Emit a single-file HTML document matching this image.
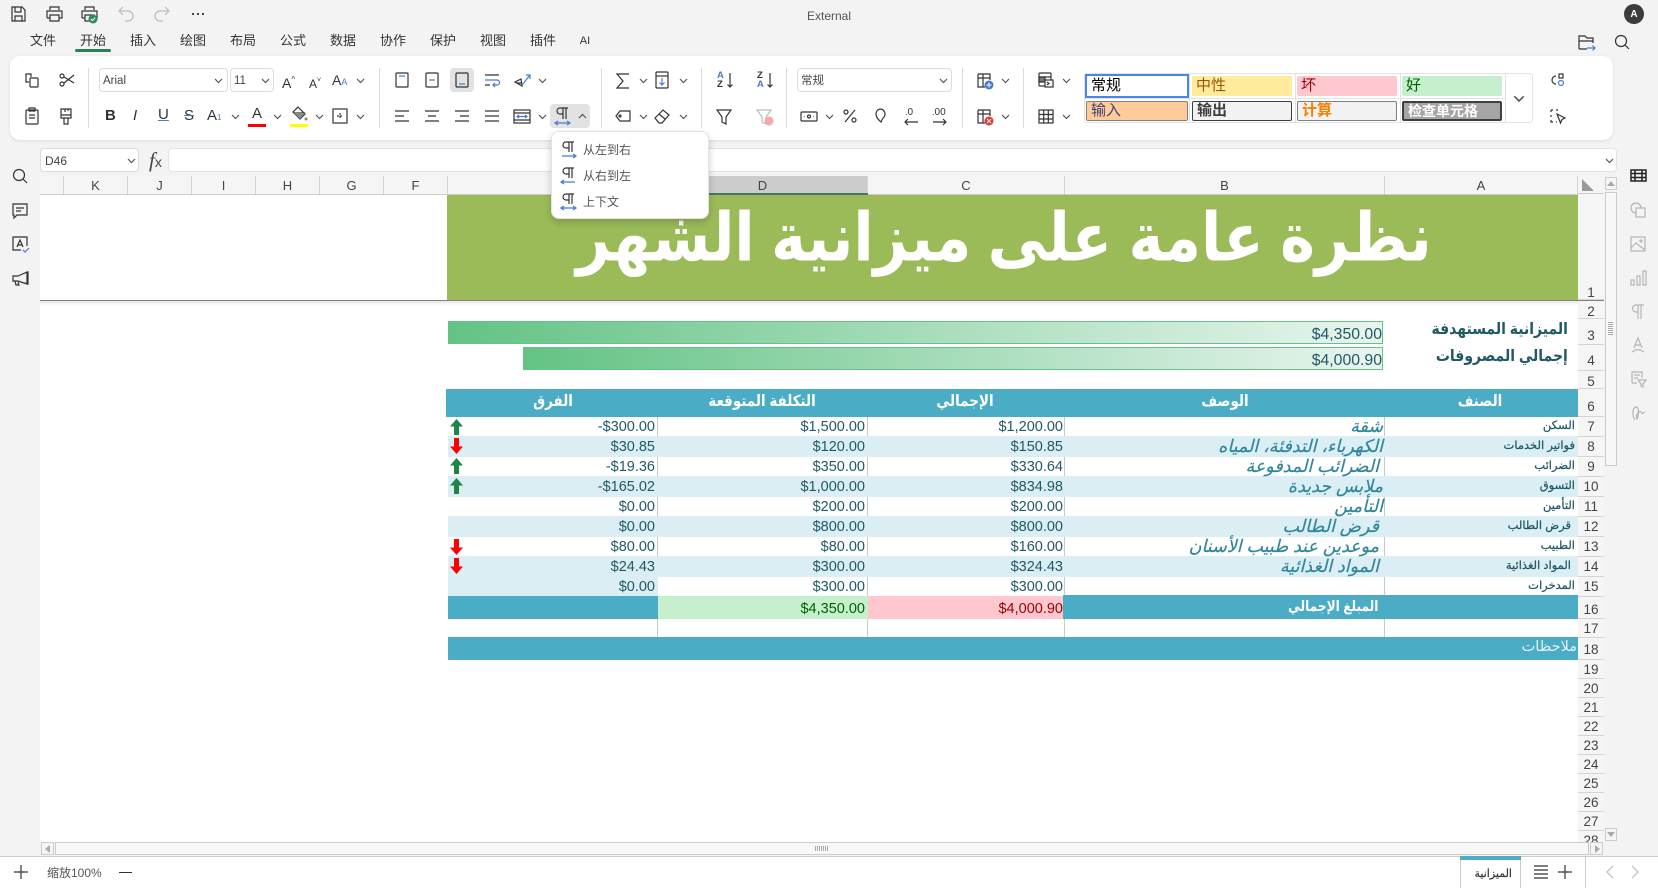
<!DOCTYPE html>
<html lang="zh"><head><meta charset="utf-8"><title>External</title>
<style>
html,body{margin:0;padding:0}
body{width:1658px;height:888px;overflow:hidden;background:#f3f3f3;position:relative;font-family:"Liberation Sans","Noto Sans CJK SC",sans-serif;color:#333}
div,svg,span.a{position:absolute}
svg{overflow:visible}
svg.i{width:24px;height:24px;fill:none;stroke:#333;stroke-width:1.2}
.b{stroke:#4a78d4}
.m{top:32px;width:50px;text-align:center;font-size:13px;line-height:18px;color:#333}
.sel{background:#fff;border:1px solid #dcdcdc;border-radius:4px;box-sizing:border-box;font-size:11.5px;line-height:24px;padding-left:3px;color:#444}
.sep{top:68px;height:60px;width:1px;background:#dcdcdc}
.ch{width:9px;height:6px;fill:none;stroke:#555;stroke-width:1.2}
.st{box-sizing:border-box;font-size:15px;line-height:18px;padding-left:4px;height:20px}
.ch2{top:176px;height:18px;font-size:13px;line-height:19px;text-align:center;color:#444;border-right:1px solid #d4d4d4;box-sizing:border-box;background:#f5f5f5}
.rh{left:1578px;width:26px;text-align:center;font-size:13px;color:#444;background:#f5f5f5;border-bottom:1px solid #d4d4d4;box-sizing:border-box}
.rn{left:1578px;width:26px;text-align:center;font-size:13.5px;line-height:16px;color:#444}
.num{font-size:14.5px;line-height:20px;height:20px;color:#215967;text-align:right;white-space:nowrap}
.ar{font-family:"Liberation Sans","DejaVu Sans",sans-serif;direction:rtl;white-space:nowrap;transform-origin:100% 50%}
.la{font-size:11.5px;line-height:20px;height:20px;color:#215967;-webkit-text-stroke:.25px #215967}
.de{font-size:17.5px;line-height:20px;height:20px;color:#31869b;font-style:italic;-webkit-text-stroke:.2px #31869b}
.he{font-size:15.5px;line-height:28px;color:#fff;font-weight:bold;transform-origin:50% 50%;text-align:center;transform:scaleX(.87)}
.gl{width:1px;background:#c8c8c8}
.mi{left:583px;font-size:12px;line-height:18px;color:#555;white-space:nowrap}
</style></head><body>
<svg width="0" height="0" style="position:absolute"><defs>
<symbol id="c" viewBox="0 0 9 6"><path d="M1 1l3.5 3.5L8 1"/></symbol>
<symbol id="up" viewBox="0 0 13 16"><path d="M6.5 0L13 7.500H9V16H4V7.500H0z"/></symbol>
<symbol id="dn" viewBox="0 0 13 16"><path d="M6.5 16L13 8.500H9V0H4v8.500H0z"/></symbol>
</defs></svg>

<!-- title bar -->
<div style="left:0;top:7px;width:1658px;text-align:center;font-size:12px;line-height:18px;color:#555">External</div>
<svg class="i" style="left:6px;top:2px"><path d="M6 5h10l3 3v11H6z M9 5v5h6V5 M9 19v-5h7v5"/></svg>
<svg class="i" style="left:42px;top:2px"><path d="M8 8V5h9v3 M5 16V9h15v7h-3 M8 16H5 M8 13h9v6H8z"/></svg>
<svg class="i" style="left:77px;top:2px"><path d="M8 8V5h9v3 M5 16V9h15v7h-3 M8 16H5 M8 13h9v6H8z"/></svg>
<svg style="left:88px;top:14px;width:10px;height:10px"><circle cx="5" cy="5" r="4.5" fill="#2e8b57"/><path d="M2.8 5l1.6 1.6 2.8-3" stroke="#fff" fill="none"/></svg>
<svg class="i" style="left:114px;top:2px;stroke:#bbb"><path d="M9 5L5 9l4 4 M5 9h9a5 5 0 0 1 0 10h-3"/></svg>
<svg class="i" style="left:150px;top:2px;stroke:#bbb"><path d="M15 5l4 4-4 4 M19 9h-9a5 5 0 0 0 0 10h3"/></svg>
<div style="left:192px;top:13px;width:2px;height:2px;background:#444;box-shadow:5px 0 #444,10px 0 #444"></div>
<div style="left:1624px;top:4px;width:20px;height:20px;border-radius:50%;background:#3c3c3c;color:#fff;font-size:10px;font-weight:bold;line-height:21px;text-align:center">A</div>

<!-- menu -->
<div class="m" style="left:18px">文件</div>
<div class="m" style="left:68px">开始</div>
<div class="m" style="left:118px">插入</div>
<div class="m" style="left:168px">绘图</div>
<div class="m" style="left:218px">布局</div>
<div class="m" style="left:268px">公式</div>
<div class="m" style="left:318px">数据</div>
<div class="m" style="left:368px">协作</div>
<div class="m" style="left:418px">保护</div>
<div class="m" style="left:468px">视图</div>
<div class="m" style="left:518px">插件</div>
<div class="m" style="left:560px;font-size:11px">AI</div>
<div style="left:75px;top:49px;width:36px;height:3px;border-radius:2px;background:#2e7d5b"></div>
<svg class="i" style="left:1574px;top:30px"><path d="M5 19V6h6l2 2h6v5 M5 11h14 M5 19h8"/><path class="b" d="M13 18h8M18.500 15.500L21 18l-2.500 2.500"/></svg>
<svg class="i" style="left:1610px;top:30px"><circle cx="11" cy="11" r="5.500"/><path d="M15 15l4 4"/></svg>

<!-- ribbon -->
<div style="left:10px;top:56px;width:1603px;height:84px;background:#fff;border-radius:10px;box-shadow:0 1px 3px rgba(0,0,0,.1)"></div>
<svg class="i" style="left:20px;top:68px"><path d="M11 9V6H6v8h3"/><rect x="10" y="10" width="8" height="9" rx="1"/></svg>
<svg class="i" style="left:55px;top:68px"><circle cx="7" cy="8" r="2"/><circle cx="7" cy="16" r="2"/><path d="M9 9l10 6M9 15l10-8"/></svg>
<svg class="i" style="left:20px;top:104px"><rect x="6" y="6" width="12" height="14" rx="1"/><path d="M9 4h6v3H9z M9 11h6M9 14h6"/></svg>
<svg class="i" style="left:54px;top:104px"><path d="M7 5h10v9H7z M7 11h10 M10 14h4v6h-4z M11 5v3M14 5v2"/></svg>
<div class="sep" style="left:88px"></div>
<div class="sep" style="left:379px"></div>
<div class="sep" style="left:601px"></div>
<div class="sep" style="left:701px"></div>
<div class="sep" style="left:786px"></div>
<div class="sep" style="left:962px"></div>
<div class="sep" style="left:1023px"></div>

<div class="sel" style="left:99px;top:68px;width:129px;height:24px">Arial</div>
<svg class="ch" style="left:214px;top:78px"><use href="#c"/></svg>
<div class="sel" style="left:230px;top:68px;width:44px;height:24px">11</div>
<svg class="ch" style="left:261px;top:78px"><use href="#c"/></svg>
<div style="left:282px;top:70px;font-size:14px;line-height:20px">A<span style="font-size:8px;vertical-align:6px">^</span></div>
<div style="left:309px;top:72px;font-size:12px;line-height:18px">A<span style="font-size:7px;vertical-align:6px">˅</span></div>
<div style="left:332px;top:70px;font-size:14px;line-height:20px">A<span style="font-size:9px;color:#4a78d4">A</span></div>
<svg class="ch" style="left:356px;top:78px"><use href="#c"/></svg>
<div style="left:105px;top:107px;font-size:15px;line-height:18px;font-weight:bold">B</div>
<div style="left:133px;top:107px;font-size:15px;line-height:18px;font-style:italic">I</div>
<div style="left:158px;top:106px;font-size:15px;line-height:18px;text-decoration:underline;text-decoration-color:#4a78d4">U</div>
<div style="left:184px;top:107px;font-size:15px;line-height:18px;text-decoration:line-through;text-decoration-color:#4a78d4">S</div>
<div style="left:207px;top:107px;font-size:15px;line-height:18px">A<span style="font-size:8px;color:#4a78d4">1</span></div>
<svg class="ch" style="left:231px;top:114px"><use href="#c"/></svg>
<div style="left:252px;top:105px;font-size:15px;line-height:18px">A</div>
<div style="left:248px;top:124px;width:18px;height:3px;background:#f00"></div>
<svg class="ch" style="left:273px;top:114px"><use href="#c"/></svg>
<svg class="i" style="left:286px;top:102px"><path d="M12 5l7 7-5 5-7-7z M8 11h11"/><path d="M8 11h11l-5 6z" fill="#888" stroke="none"/><circle cx="20" cy="17" r="1.500" fill="#888" stroke="none"/></svg>
<div style="left:290px;top:124px;width:18px;height:3px;background:#ff0"></div>
<svg class="ch" style="left:315px;top:114px"><use href="#c"/></svg>
<svg class="i b" style="left:328px;top:104px"><rect x="5" y="5" width="14" height="14"/><path d="M12 9v6M9 12h6" stroke-dasharray="2 1"/></svg>
<svg class="ch" style="left:356px;top:114px"><use href="#c"/></svg>

<div style="left:450px;top:68px;width:24px;height:24px;border-radius:4px;background:#e2e2e2"></div>
<svg class="i" style="left:390px;top:68px"><rect x="6" y="5" width="12" height="14" rx="1"/><path class="b" d="M9 8h6"/></svg>
<svg class="i" style="left:420px;top:68px"><rect x="6" y="5" width="12" height="14" rx="1"/><path class="b" d="M9 12h6"/></svg>
<svg class="i" style="left:450px;top:68px"><rect x="6" y="5" width="12" height="14" rx="1"/><path class="b" d="M9 16h6"/></svg>
<svg class="i" style="left:480px;top:68px"><path d="M5 7h14M5 17h5"/><path class="b" d="M5 12h12a2.500 2.500 0 0 1 0 5h-4M15 15l-2 2 2 2"/></svg>
<svg class="i" style="left:510px;top:68px"><path d="M5 14l6-3 1 7z M7 15h4"/><path class="b" d="M12 17l8-10M16 7h4v4"/></svg>
<svg class="ch" style="left:538px;top:78px"><use href="#c"/></svg>
<svg class="i" style="left:390px;top:104px"><path d="M5 7h14M5 12h9M5 17h14"/></svg>
<svg class="i" style="left:420px;top:104px"><path d="M5 7h14M8 12h8M5 17h14"/></svg>
<svg class="i" style="left:450px;top:104px"><path d="M5 7h14M10 12h9M5 17h14"/></svg>
<svg class="i" style="left:480px;top:104px"><path d="M5 7h14M5 12h14M5 17h14"/></svg>
<svg class="i" style="left:510px;top:104px"><rect x="4" y="6" width="16" height="13"/><path d="M4 9h16M4 16h16"/><path class="b" d="M7 12.500h10M9 11l-2 1.500L9 14M15 11l2 1.500-2 1.500"/></svg>
<svg class="ch" style="left:538px;top:114px"><use href="#c"/></svg>
<div style="left:550px;top:104px;width:40px;height:24px;border-radius:4px;background:#e2e2e2"></div>
<svg class="i" style="left:550px;top:104px"><path d="M13 4v11M16 4v11M18 4h-8a3 3 0 0 0 0 6h3"/><path class="b" d="M5 19h15M8 17l-3 2 3 2M17 17l3 2-3 2"/></svg>
<svg class="ch" style="left:578px;top:113px;transform:scaleY(-1)"><use href="#c"/></svg>

<svg class="i" style="left:611px;top:68px"><path d="M18 6H6l6 7-6 7h12"/></svg>
<svg class="ch" style="left:639px;top:78px"><use href="#c"/></svg>
<svg class="i" style="left:650px;top:68px"><rect x="6" y="4" width="12" height="16" rx="1"/><path d="M6 8h12"/><path class="b" d="M12 10v7M9.500 14.500L12 17l2.500-2.500"/></svg>
<svg class="ch" style="left:679px;top:78px"><use href="#c"/></svg>
<svg class="i" style="left:611px;top:104px"><path d="M9 7h10v10H9l-4-5z"/><circle cx="9" cy="12" r="1"/></svg>
<svg class="ch" style="left:639px;top:114px"><use href="#c"/></svg>
<svg class="i" style="left:650px;top:104px"><path d="M5 14l8-8 6 5-7 8H9z M9 10l6 5"/></svg>
<svg class="ch" style="left:679px;top:114px"><use href="#c"/></svg>

<div style="left:717px;top:71px;font-size:9.500px;line-height:9px;font-weight:bold;color:#4a78d4">A<br><span style="color:#333">Z</span></div>
<svg class="i" style="left:718px;top:68px"><path d="M12 5v14M9.500 16.500L12 19l2.500-2.500"/></svg>
<div style="left:757px;top:71px;font-size:9.500px;line-height:9px;font-weight:bold">Z<br><span style="color:#4a78d4">A</span></div>
<svg class="i" style="left:758px;top:68px"><path d="M12 5v14M9.500 16.500L12 19l2.500-2.500"/></svg>
<svg class="i" style="left:712px;top:104px"><path d="M5 6h14l-5 7v7l-4-2v-5z"/></svg>
<svg class="i" style="left:752px;top:104px;stroke:#bbb"><path d="M5 6h14l-5 7v7l-4-2v-5z"/></svg>
<svg style="left:764px;top:116px;width:10px;height:10px"><circle cx="5" cy="5" r="4.500" fill="#f5a9a9"/></svg>

<div class="sel" style="left:797px;top:68px;width:155px;height:24px">常规</div>
<svg class="ch" style="left:939px;top:78px"><use href="#c"/></svg>
<svg class="i" style="left:797px;top:104px"><rect x="4" y="8" width="16" height="9" rx="1"/><circle cx="12" cy="12.500" r="1.500"/><path d="M7 12.500h.5M16.500 12.500h.5"/></svg>
<svg class="ch" style="left:825px;top:114px"><use href="#c"/></svg>
<svg class="i" style="left:838px;top:104px"><path d="M17 6L7 18"/><circle cx="8" cy="8" r="2"/><circle cx="16" cy="16" r="2"/></svg>
<svg class="i" style="left:868px;top:104px"><path d="M12 5a5 5 0 0 1 4 8c-1 1-2 2-3 5-2-2-5-4-5-8a5 5 0 0 1 4-5z"/></svg>
<div style="left:905px;top:107px;font-size:9px;line-height:10px">.<span style="font-size:10px">0</span></div>
<svg class="i b" style="left:899px;top:108px"><path d="M6 14h13M9 11l-3 3 3 3"/></svg>
<div style="left:932px;top:107px;font-size:9px;line-height:10px">.<span style="font-size:10px">00</span></div>
<svg class="i b" style="left:928px;top:108px"><path d="M5 14h13M15 11l3 3-3 3"/></svg>

<svg class="i" style="left:973px;top:68px"><path d="M5 6h12v6M5 6v13h7M5 10h12M10 6v13"/></svg>
<svg style="left:984px;top:80px;width:10px;height:10px"><circle cx="5" cy="5" r="4.500" fill="#4a78d4"/><path d="M2.500 5h5M5 2.500v5" stroke="#fff"/></svg>
<svg class="ch" style="left:1001px;top:78px"><use href="#c"/></svg>
<svg class="i" style="left:973px;top:104px"><path d="M5 6h12v6M5 6v13h7M5 10h12M10 6v13"/></svg>
<svg style="left:984px;top:116px;width:10px;height:10px"><circle cx="5" cy="5" r="4.500" fill="#e53935"/><path d="M3 3l4 4M7 3l-4 4" stroke="#fff"/></svg>
<svg class="ch" style="left:1001px;top:114px"><use href="#c"/></svg>
<svg class="i" style="left:1034px;top:68px"><rect x="5" y="5" width="12" height="13" rx="1"/><path d="M5 9h12"/><path d="M5 9h6v5H5z" fill="#777"/><rect x="11" y="12" width="8" height="7" fill="#fff"/><path d="M13 14l2 1.500-2 1.500"/></svg>
<svg class="ch" style="left:1062px;top:78px"><use href="#c"/></svg>
<svg class="i" style="left:1034px;top:104px"><rect x="5" y="6" width="14" height="13"/><path d="M5 10.500h14M5 15h14M9.700 6v13M14.300 6v13"/></svg>
<svg class="ch" style="left:1062px;top:114px"><use href="#c"/></svg>

<!-- style gallery -->
<div style="left:1084px;top:73px;width:449px;height:50px;background:#fff;border:1px solid #e2e2e2;border-radius:3px;box-sizing:border-box"></div>
<div style="left:1189px;top:74px;width:1px;height:48px;background:#e2e2e2"></div>
<div style="left:1295px;top:74px;width:1px;height:48px;background:#e2e2e2"></div>
<div style="left:1400px;top:74px;width:1px;height:48px;background:#e2e2e2"></div>
<div style="left:1505px;top:74px;width:1px;height:48px;background:#e2e2e2"></div>
<div style="left:1085px;top:98px;width:420px;height:1px;background:#e2e2e2"></div>
<div class="st" style="left:1085px;top:74px;width:104px;height:24px;background:#fff;border:2px solid #4a86e8;color:#000;line-height:20px">常规</div>
<div class="st" style="left:1192px;top:76px;width:100px;background:#ffeb9c;color:#9c5700;border-radius:2px;line-height:20px">中性</div>
<div class="st" style="left:1297px;top:76px;width:100px;background:#ffc7ce;color:#9c0006;border-radius:2px;line-height:20px">坏</div>
<div class="st" style="left:1402px;top:76px;width:100px;background:#c6efce;color:#006100;border-radius:2px;line-height:20px">好</div>
<div class="st" style="left:1086px;top:101px;width:102px;background:#ffcc99;color:#3f3f76;border:1px solid #7f7f7f;border-radius:2px">输入</div>
<div class="st" style="left:1192px;top:101px;width:100px;background:#f2f2f2;color:#3f3f3f;border:1px solid #3f3f3f;border-radius:2px;font-weight:bold">输出</div>
<div class="st" style="left:1297px;top:101px;width:100px;background:#f2f2f2;color:#fa7d00;border:1px solid #7f7f7f;border-radius:2px;font-weight:bold">计算</div>
<div class="st" style="left:1402px;top:101px;width:100px;background:#a5a5a5;color:#fff;border:2px solid #3f3f3f;border-radius:2px;font-weight:bold;line-height:17px;font-size:14px">检查单元格</div>
<svg class="ch" style="left:1513px;top:95px;width:12px;height:8px"><use href="#c"/></svg>
<svg class="i" style="left:1545px;top:68px"><path d="M11 8a4 4 0 1 0 0 8"/><rect x="14" y="6" width="4" height="4"/><circle class="b" cx="16" cy="15" r="2.500"/></svg>
<svg class="i" style="left:1545px;top:104px"><path d="M6 6h2M11 6h2M6 6v2M6 11v2M6 16v2h2M11 18h1" /><path d="M12 10l8 4-3 1.500-1.500 3.500z"/></svg>

<!-- formula bar -->
<div class="sel" style="left:40px;top:148px;width:99px;height:24px;font-size:12px;padding-left:4px">D46</div>
<svg class="ch" style="left:127px;top:158px"><use href="#c"/></svg>
<div style="left:149px;top:149px;font-family:'Liberation Serif',serif;font-style:italic;font-size:21px;line-height:22px;color:#444">f<span style="font-style:normal;font-size:14px;font-family:'Liberation Sans'">x</span></div>
<div style="left:168px;top:148px;width:1449px;height:24px;background:#fff;border:1px solid #e2e2e2;border-radius:4px;box-sizing:border-box"></div>
<svg class="ch" style="left:1605px;top:158px"><use href="#c"/></svg>

<!-- left side icons -->
<svg class="i" style="left:8px;top:164px"><circle cx="11" cy="11" r="5.500"/><path d="M15 15l4 4"/></svg>
<svg class="i" style="left:8px;top:198px"><path d="M5 6h14v11H9l-3 3v-3H5z M8 10h8M8 13h5"/></svg>
<svg class="i" style="left:8px;top:232px"><path d="M13 18H5V5h14v9"/><path d="M9 15l3-7 3 7M10 13h4"/><path class="b" d="M15 18l2 2 4-4"/></svg>
<svg class="i" style="left:8px;top:266px"><path d="M19 6v12l-9-3H5V10h5z M7 15l1 4h3l-1-3 M17 7l3-1v12l-3-1"/></svg>

<!-- right side icons -->
<svg class="i" style="left:1626px;top:164px;stroke:#222;stroke-width:1.500"><rect x="5" y="6" width="15" height="11"/><path d="M5 9.500h15M5 13.500h15M9 6v11M16 6v11"/></svg>
<svg class="i" style="left:1626px;top:198px;stroke:#b5b5b5"><circle cx="10" cy="10" r="5"/><rect x="10" y="10" width="9" height="9" fill="#f3f3f3"/></svg>
<svg class="i" style="left:1626px;top:232px;stroke:#b5b5b5"><rect x="5" y="5" width="14" height="14"/><path d="M5 16l5-5 9 7"/><circle cx="15" cy="9" r="1"/></svg>
<svg class="i" style="left:1626px;top:266px;stroke:#b5b5b5"><rect x="5" y="14" width="3" height="5"/><rect x="11" y="10" width="3" height="9"/><rect x="17" y="5" width="3" height="14"/></svg>
<svg class="i" style="left:1626px;top:300px;stroke:#b5b5b5"><path d="M12 5v14M15 5v14M18 5h-8a3.500 3.500 0 0 0 0 7h2"/></svg>
<svg class="i" style="left:1626px;top:333px;stroke:#b5b5b5"><path d="M8 15l4-10 4 10M9.500 12h5M6 19c4-3 8-3 12 0"/></svg>
<svg class="i" style="left:1626px;top:367px;stroke:#b5b5b5"><path d="M6 16V5h10v6M8 8h6M8 11h4M6 16h5M12 13h8l-3 4v3l-2-1v-2z"/></svg>
<svg class="i" style="left:1626px;top:401px;stroke:#b5b5b5"><path d="M9 19c-3-4-3-12 1-13s2 12 1 12-1-5 2-7 2 3 4 1l2-1"/></svg>

<!-- sheet -->
<div style="left:40px;top:194px;width:1538px;height:648px;background:#fff"></div>
<div class="ch2" style="left:40px;width:24px"></div>
<div class="ch2" style="left:64px;width:64px">K</div>
<div class="ch2" style="left:128px;width:64px">J</div>
<div class="ch2" style="left:192px;width:64px">I</div>
<div class="ch2" style="left:256px;width:64px">H</div>
<div class="ch2" style="left:320px;width:64px">G</div>
<div class="ch2" style="left:384px;width:64px">F</div>
<div class="ch2" style="left:448px;width:210px"></div>
<div class="ch2" style="left:658px;width:210px;background:#ccc">D</div>
<div class="ch2" style="left:868px;width:197px">C</div>
<div class="ch2" style="left:1065px;width:320px">B</div>
<div class="ch2" style="left:1385px;width:193px">A</div>
<div style="left:40px;top:194px;width:1538px;height:1px;background:#ccc"></div>
<div style="left:658px;top:193px;width:210px;height:2px;background:#417a5e"></div>
<div style="left:1578px;top:176px;width:26px;height:18px;background:#f5f5f5;border-bottom:1px solid #ccc;box-sizing:border-box"></div>
<svg style="left:1582px;top:179px;width:12px;height:12px"><path d="M0 0L12 12H0z" fill="#999"/></svg>

<!-- row headers -->
<div class="rh" style="top:194px;height:106px;"></div>
<div class="rh" style="top:300px;height:19px"></div>
<div class="rh" style="top:319px;height:26px"></div>
<div class="rh" style="top:345px;height:26px"></div>
<div class="rh" style="top:371px;height:18px"></div>
<div class="rh" style="top:389px;height:28px"></div>
<div class="rh" style="top:417px;height:20px"></div>
<div class="rh" style="top:437px;height:20px"></div>
<div class="rh" style="top:457px;height:20px"></div>
<div class="rh" style="top:477px;height:20px"></div>
<div class="rh" style="top:497px;height:20px"></div>
<div class="rh" style="top:517px;height:20px"></div>
<div class="rh" style="top:537px;height:20px"></div>
<div class="rh" style="top:557px;height:20px"></div>
<div class="rh" style="top:577px;height:20px"></div>
<div class="rh" style="top:597px;height:22px"></div>
<div class="rh" style="top:619px;height:19px"></div>
<div class="rh" style="top:638px;height:22px"></div>
<div class="rh" style="top:660px;height:19px"></div>
<div class="rh" style="top:679px;height:19px"></div>
<div class="rh" style="top:698px;height:19px"></div>
<div class="rh" style="top:717px;height:19px"></div>
<div class="rh" style="top:736px;height:19px"></div>
<div class="rh" style="top:755px;height:19px"></div>
<div class="rh" style="top:774px;height:19px"></div>
<div class="rh" style="top:793px;height:19px"></div>
<div class="rh" style="top:812px;height:19px"></div>
<div class="rh" style="top:831px;height:11px;border-bottom:0;overflow:hidden"></div>
<div class="rn" style="top:285px">1</div>
<div class="rn" style="top:304px">2</div>
<div class="rn" style="top:328px">3</div>
<div class="rn" style="top:353px">4</div>
<div class="rn" style="top:374px">5</div>
<div class="rn" style="top:399px">6</div>
<div class="rn" style="top:419px">7</div>
<div class="rn" style="top:439px">8</div>
<div class="rn" style="top:459px">9</div>
<div class="rn" style="top:479px">10</div>
<div class="rn" style="top:499px">11</div>
<div class="rn" style="top:519px">12</div>
<div class="rn" style="top:539px">13</div>
<div class="rn" style="top:559px">14</div>
<div class="rn" style="top:579px">15</div>
<div class="rn" style="top:602px">16</div>
<div class="rn" style="top:621px">17</div>
<div class="rn" style="top:642px">18</div>
<div class="rn" style="top:662px">19</div>
<div class="rn" style="top:681px">20</div>
<div class="rn" style="top:700px">21</div>
<div class="rn" style="top:719px">22</div>
<div class="rn" style="top:738px">23</div>
<div class="rn" style="top:757px">24</div>
<div class="rn" style="top:776px">25</div>
<div class="rn" style="top:795px">26</div>
<div class="rn" style="top:814px">27</div>
<div class="rn" style="top:833px;height:9px;overflow:hidden">28</div>

<!-- banner -->
<div style="left:447px;top:195px;width:1131px;height:105px;background:#9bbb59"></div>
<div class="ar" style="right:226px;top:188px;font-size:60px;line-height:100px;color:#fff;font-weight:bold;transform:scale(.986,1.12)">نظرة عامة على ميزانية الشهر</div>
<div style="left:40px;top:300px;width:1564px;height:1px;background:#808080"></div>
<div style="left:40px;top:301px;width:1538px;height:5px;background:linear-gradient(#e8e8e8,#fff)"></div>

<!-- bars -->
<div style="left:448px;top:321px;width:935px;height:23px;box-sizing:border-box;border:1px solid #63c384;border-left:0;background:linear-gradient(90deg,#63c384,#e8f5ee)"></div>
<div style="left:523px;top:347px;width:860px;height:23px;box-sizing:border-box;border:1px solid #63c384;border-left:0;background:linear-gradient(90deg,#63c384,#e8f5ee)"></div>
<div class="num" style="right:276px;top:325px;font-size:15.800px">$4,350.00</div>
<div class="num" style="right:276px;top:351px;font-size:15.800px">$4,000.90</div>
<div class="ar" style="right:90px;top:320px;font-size:16px;line-height:20px;font-weight:bold;color:#215967;transform:scaleX(.875)">الميزانية المستهدفة</div>
<div class="ar" style="right:90px;top:347px;font-size:16px;line-height:20px;font-weight:bold;color:#215967;transform:scaleX(.875)">إجمالي المصروفات</div>

<!-- table header -->
<div style="left:446px;top:389px;width:1132px;height:28px;background:#4bacc6"></div>
<div class="ar he" style="left:458px;width:190px;top:388px">الفرق</div>
<div class="ar he" style="left:662px;width:200px;top:388px">التكلفة المتوقعة</div>
<div class="ar he" style="left:870px;width:190px;top:388px">الإجمالي</div>
<div class="ar he" style="left:1125px;width:200px;top:388px">الوصف</div>
<div class="ar he" style="left:1390px;width:180px;top:388px">الصنف</div>

<!-- bands -->
<div style="left:448px;top:436px;width:1130px;height:21px;background:#daeef3"></div>
<div style="left:448px;top:476px;width:1130px;height:21px;background:#daeef3"></div>
<div style="left:448px;top:516px;width:1130px;height:21px;background:#daeef3"></div>
<div style="left:448px;top:556px;width:1130px;height:21px;background:#daeef3"></div>
<div style="left:448px;top:577px;width:210px;height:20px;background:#daeef3"></div>

<!-- grid lines on white rows -->
<div class="gl" style="left:657px;top:417px;height:19px"></div><div class="gl" style="left:867px;top:417px;height:19px"></div><div class="gl" style="left:1064px;top:417px;height:19px"></div><div class="gl" style="left:1384px;top:417px;height:19px"></div>
<div class="gl" style="left:657px;top:457px;height:19px"></div><div class="gl" style="left:867px;top:457px;height:19px"></div><div class="gl" style="left:1064px;top:457px;height:19px"></div><div class="gl" style="left:1384px;top:457px;height:19px"></div>
<div class="gl" style="left:657px;top:497px;height:19px"></div><div class="gl" style="left:867px;top:497px;height:19px"></div><div class="gl" style="left:1064px;top:497px;height:19px"></div><div class="gl" style="left:1384px;top:497px;height:19px"></div>
<div class="gl" style="left:657px;top:537px;height:19px"></div><div class="gl" style="left:867px;top:537px;height:19px"></div><div class="gl" style="left:1064px;top:537px;height:19px"></div><div class="gl" style="left:1384px;top:537px;height:19px"></div>
<div class="gl" style="left:867px;top:577px;height:19px"></div><div class="gl" style="left:1064px;top:577px;height:19px"></div><div class="gl" style="left:1384px;top:577px;height:19px"></div>
<div class="gl" style="left:657px;top:619px;height:18px"></div><div class="gl" style="left:867px;top:619px;height:18px"></div><div class="gl" style="left:1064px;top:619px;height:18px"></div><div class="gl" style="left:1384px;top:619px;height:18px"></div>

<!-- numbers -->
<div class="num" style="right:1003px;top:417px">-$300.00</div><div class="num" style="right:793px;top:417px">$1,500.00</div><div class="num" style="right:595px;top:417px">$1,200.00</div>
<div class="num" style="right:1003px;top:437px">$30.85</div><div class="num" style="right:793px;top:437px">$120.00</div><div class="num" style="right:595px;top:437px">$150.85</div>
<div class="num" style="right:1003px;top:457px">-$19.36</div><div class="num" style="right:793px;top:457px">$350.00</div><div class="num" style="right:595px;top:457px">$330.64</div>
<div class="num" style="right:1003px;top:477px">-$165.02</div><div class="num" style="right:793px;top:477px">$1,000.00</div><div class="num" style="right:595px;top:477px">$834.98</div>
<div class="num" style="right:1003px;top:497px">$0.00</div><div class="num" style="right:793px;top:497px">$200.00</div><div class="num" style="right:595px;top:497px">$200.00</div>
<div class="num" style="right:1003px;top:517px">$0.00</div><div class="num" style="right:793px;top:517px">$800.00</div><div class="num" style="right:595px;top:517px">$800.00</div>
<div class="num" style="right:1003px;top:537px">$80.00</div><div class="num" style="right:793px;top:537px">$80.00</div><div class="num" style="right:595px;top:537px">$160.00</div>
<div class="num" style="right:1003px;top:557px">$24.43</div><div class="num" style="right:793px;top:557px">$300.00</div><div class="num" style="right:595px;top:557px">$324.43</div>
<div class="num" style="right:1003px;top:577px">$0.00</div><div class="num" style="right:793px;top:577px">$300.00</div><div class="num" style="right:595px;top:577px">$300.00</div>

<!-- arrows -->
<svg style="left:450px;top:419px;width:13px;height:16px;fill:#1e8449"><use href="#up"/></svg>
<svg style="left:450px;top:438px;width:13px;height:16px;fill:#f00"><use href="#dn"/></svg>
<svg style="left:450px;top:458px;width:13px;height:16px;fill:#1e8449"><use href="#up"/></svg>
<svg style="left:450px;top:478px;width:13px;height:16px;fill:#1e8449"><use href="#up"/></svg>
<svg style="left:450px;top:539px;width:13px;height:16px;fill:#f00"><use href="#dn"/></svg>
<svg style="left:450px;top:558px;width:13px;height:16px;fill:#f00"><use href="#dn"/></svg>

<!-- description -->
<div class="ar de" style="right:275px;top:416px">شقة</div>
<div class="ar de" style="right:275px;top:436px">الكهرباء، التدفئة، المياه</div>
<div class="ar de" style="right:279px;top:456px">الضرائب المدفوعة</div>
<div class="ar de" style="right:275px;top:476px">ملابس جديدة</div>
<div class="ar de" style="right:275px;top:496px">التأمين</div>
<div class="ar de" style="right:279px;top:516px">قرض الطالب</div>
<div class="ar de" style="right:279px;top:536px">موعدين عند طبيب الأسنان</div>
<div class="ar de" style="right:279px;top:556px">المواد الغذائية</div>

<!-- category -->
<div class="ar la" style="right:83px;top:416px">السكن</div>
<div class="ar la" style="right:83px;top:436px">فواتير الخدمات</div>
<div class="ar la" style="right:83px;top:456px">الضرائب</div>
<div class="ar la" style="right:83px;top:476px">التسوق</div>
<div class="ar la" style="right:83px;top:496px">التأمين</div>
<div class="ar la" style="right:87px;top:516px">قرض الطالب</div>
<div class="ar la" style="right:83px;top:536px">الطبيب</div>
<div class="ar la" style="right:87px;top:556px">المواد الغذائية</div>
<div class="ar la" style="right:83px;top:576px">المدخرات</div>

<!-- totals -->
<div style="left:448px;top:596px;width:210px;height:23px;background:#4bacc6"></div>
<div style="left:658px;top:596px;width:210px;height:23px;background:#c6efce"></div>
<div style="left:868px;top:596px;width:195px;height:23px;background:#ffc7ce"></div>
<div style="left:1063px;top:595px;width:515px;height:24px;background:#4bacc6"></div>
<div class="num" style="right:793px;top:599px;color:#006100">$4,350.00</div>
<div class="num" style="right:595px;top:599px;color:#9c0006">$4,000.90</div>
<div class="ar" style="right:280px;top:597px;font-size:14.500px;line-height:20px;color:#fff;font-weight:bold;transform:scaleX(.84)">المبلغ الإجمالي</div>
<div style="left:448px;top:637px;width:1130px;height:23px;background:#4bacc6"></div>
<div class="ar" style="right:81px;top:637px;font-size:14.500px;line-height:21px;color:#e4f2f6">ملاحظات</div>

<!-- v scroll -->
<div style="left:1605px;top:177px;width:12px;height:13px;background:#f5f5f5;border:1px solid #ccc;box-sizing:border-box"></div>
<svg style="left:1607px;top:181px;width:8px;height:5px"><path d="M4 0l4 5H0z" fill="#aaa"/></svg>
<div style="left:1605px;top:192px;width:12px;height:274px;background:#f7f7f7;border:1px solid #ccc;box-sizing:border-box"></div>
<div style="left:1608px;top:322px;width:5px;height:13px;background:repeating-linear-gradient(#aaa 0 1px,#f7f7f7 1px 2px)"></div>
<div style="left:1605px;top:828px;width:12px;height:13px;background:#f5f5f5;border:1px solid #ccc;box-sizing:border-box"></div>
<svg style="left:1607px;top:832px;width:8px;height:5px"><path d="M4 5l4-5H0z" fill="#aaa"/></svg>

<!-- h scroll -->
<div style="left:40px;top:842px;width:1564px;height:14px;background:#f3f3f3"></div>
<div style="left:41px;top:842px;width:13px;height:13px;background:#f5f5f5;border:1px solid #ccc;box-sizing:border-box"></div>
<svg style="left:45px;top:845px;width:5px;height:8px"><path d="M0 4l5-4v8z" fill="#aaa"/></svg>
<div style="left:55px;top:842px;width:1534px;height:13px;background:#f7f7f7;border:1px solid #ccc;box-sizing:border-box"></div>
<div style="left:815px;top:846px;width:13px;height:5px;background:repeating-linear-gradient(90deg,#aaa 0 1px,#f7f7f7 1px 2px)"></div>
<div style="left:1590px;top:842px;width:13px;height:13px;background:#f5f5f5;border:1px solid #ccc;box-sizing:border-box"></div>
<svg style="left:1595px;top:845px;width:5px;height:8px"><path d="M5 4L0 0v8z" fill="#aaa"/></svg>

<!-- bottom bar -->
<div style="left:0;top:856px;width:1658px;height:32px;background:#fff;border-top:1px solid #ccc;box-sizing:border-box"></div>
<svg class="i" style="left:9px;top:860px"><path d="M5 12h14M12 5v14"/></svg>
<div style="left:47px;top:864px;font-size:12px;line-height:18px;color:#555">缩放100%</div>
<div style="left:119px;top:872px;width:13px;height:1px;background:#333"></div>
<div style="left:1460px;top:857px;width:61px;height:31px;background:#fff;border-left:1px solid #ccc;border-right:1px solid #ccc;box-sizing:border-box"></div>
<div style="left:1460px;top:856px;width:61px;height:4px;background:#4bacc6"></div>
<div class="ar" style="right:146px;top:865px;font-size:11px;line-height:18px;color:#333;-webkit-text-stroke:.2px #333">الميزانية</div>
<div style="left:1585px;top:857px;width:1px;height:31px;background:#ccc"></div>
<svg class="i" style="left:1529px;top:860px"><path d="M5 6h14M5 10h14M5 14h14M5 18h14"/></svg>
<svg class="i" style="left:1553px;top:860px"><path d="M5 12h14M12 5v14"/></svg>
<svg class="i" style="left:1598px;top:860px;stroke:#bbb"><path d="M15 6l-6 6 6 6"/></svg>
<svg class="i" style="left:1623px;top:860px;stroke:#bbb"><path d="M9 6l6 6-6 6"/></svg>

<!-- dropdown -->
<div style="left:551px;top:131px;width:158px;height:88px;background:#fff;border:1px solid #e4e4e4;border-radius:8px;box-sizing:border-box;box-shadow:0 3px 8px rgba(0,0,0,.2)"></div>
<svg class="i" style="left:556px;top:138px"><path d="M13 4v10M16 4v10M18 4h-8a3 3 0 0 0 0 6h3"/><path class="b" d="M6 18h14M17 16l3 2-3 2"/></svg>
<div class="mi" style="top:141px">从左到右</div>
<svg class="i" style="left:556px;top:164px"><path d="M13 4v10M16 4v10M18 4h-8a3 3 0 0 0 0 6h3"/><path class="b" d="M5 18h14M8 16l-3 2 3 2"/></svg>
<div class="mi" style="top:167px">从右到左</div>
<svg class="i" style="left:556px;top:190px"><path d="M13 4v10M16 4v10M18 4h-8a3 3 0 0 0 0 6h3"/><path class="b" d="M5 18h15M8 16l-3 2 3 2M17 16l3 2-3 2"/></svg>
<div class="mi" style="top:193px">上下文</div>
</body></html>
